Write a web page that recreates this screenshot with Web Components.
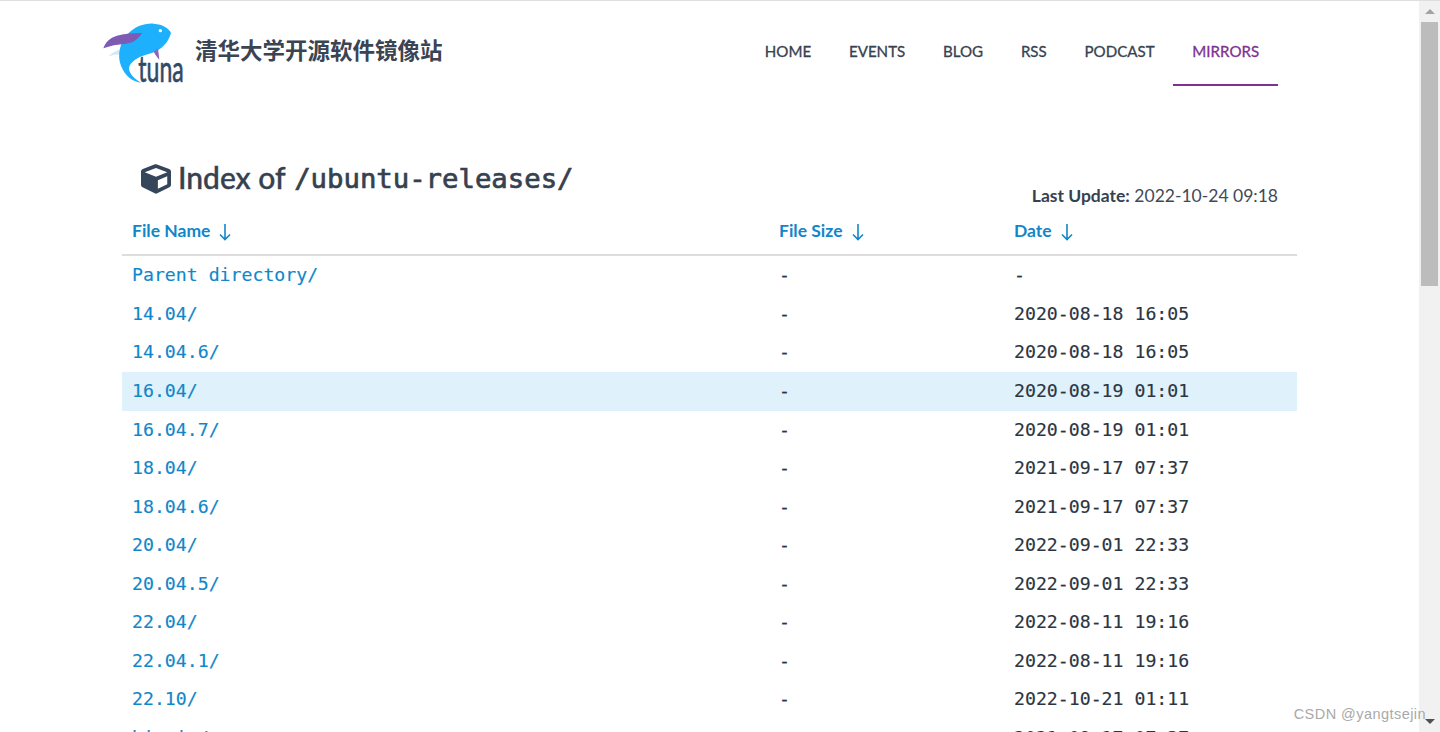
<!DOCTYPE html>
<html lang="zh">
<head>
<meta charset="utf-8">
<title>Index of /ubuntu-releases/</title>
<style>
  html, body { margin: 0; height: 100%; overflow: hidden; background: #fff; }
</style>
</head>
<body>
<mirror-app>
  <mirror-header slot="header">
    <nav-link href="#">HOME</nav-link>
    <nav-link href="#">EVENTS</nav-link>
    <nav-link href="#">BLOG</nav-link>
    <nav-link href="#">RSS</nav-link>
    <nav-link href="#">PODCAST</nav-link>
    <nav-link href="#" active>MIRRORS</nav-link>
  </mirror-header>
  <index-title path="/ubuntu-releases/" updated="2022-10-24 09:18"></index-title>
  <file-table>
    <file-row name="Parent directory/" size="-" date="-"></file-row>
    <file-row short name="14.04/" size="-" date="2020-08-18 16:05"></file-row>
    <file-row name="14.04.6/" size="-" date="2020-08-18 16:05"></file-row>
    <file-row name="16.04/" size="-" date="2020-08-19 01:01" hover></file-row>
    <file-row short name="16.04.7/" size="-" date="2020-08-19 01:01"></file-row>
    <file-row name="18.04/" size="-" date="2021-09-17 07:37"></file-row>
    <file-row short name="18.04.6/" size="-" date="2021-09-17 07:37"></file-row>
    <file-row name="20.04/" size="-" date="2022-09-01 22:33"></file-row>
    <file-row short name="20.04.5/" size="-" date="2022-09-01 22:33"></file-row>
    <file-row name="22.04/" size="-" date="2022-08-11 19:16"></file-row>
    <file-row short name="22.04.1/" size="-" date="2022-08-11 19:16"></file-row>
    <file-row name="22.10/" size="-" date="2022-10-21 01:11"></file-row>
    <file-row name="bionic/" size="-" date="2021-09-17 07:37"></file-row>
  </file-table>
</mirror-app>

<script>
const SANS = `Lato, "Noto Sans CJK SC", sans-serif`;
const MONO = `"DejaVu Sans Mono", monospace`;

class MirrorApp extends HTMLElement {
  connectedCallback() {
    this.attachShadow({ mode: 'open' });
    this.shadowRoot.innerHTML = `
      <style>
        :host { display: flex; height: 100vh; overflow: hidden; position: relative;
                box-sizing: border-box; border-top: 1px solid #dedede; font-family: ${SANS}; color: #35404f; }
        .page { flex: 1; min-width: 0; overflow: hidden; }
        .content { width: 1175px; margin-left: 122px; }
        .watermark { position: absolute; right: 14px; bottom: 10px; color: #a9a9a9;
                     font: 14.5px "Liberation Sans", sans-serif; letter-spacing: .45px; }
      </style>
      <div class="page">
        <slot name="header"></slot>
        <div class="content"><slot></slot></div>
      </div>
      <fake-scrollbar></fake-scrollbar>
      <div class="watermark">CSDN @yangtsejin</div>
    `;
  }
}

class MirrorHeader extends HTMLElement {
  connectedCallback() {
    this.attachShadow({ mode: 'open' });
    this.shadowRoot.innerHTML = `
      <style>
        :host { display: flex; align-items: flex-start; height: 86px; padding: 0 141px 0 95px; }
        .brand { display: flex; align-items: center; gap: 9px; padding-top: 14px; }
        svg { display: block; width: 91px; height: 75px; flex: none; overflow: visible; }
        .title { font: 700 22.5px/1 "Noto Sans CJK SC", sans-serif; color: #3a4452; margin-top: -7px; }
        nav { margin-left: auto; display: flex; }
      </style>
      <div class="brand">
        <svg viewBox="0 0 273 225" aria-hidden="true">
          <path fill="#cfeaf5" d="M40 124C52 112 66 106 80 102L76 118C64 118 52 120 40 124Z"/>
          <path fill="#1db1fd" d="M97 58C120 34 150 24 176 26C204 28 222 40 228 54C220 82 202 100 180 110C164 116 146 120 134 126C116 136 102 148 102 162C104 178 120 192 138 203C112 200 88 180 78 152C66 122 74 84 97 58Z"/>
          <path fill="#7d5bb5" d="M25 100C30 84 44 68 66 62C90 55 118 53 141 54C132 70 116 84 92 86C68 88 44 92 25 100Z"/>
          <path fill="#8a66bd" d="M176 110L189 100C190 110 192 122 193 134C186 126 180 118 176 110Z"/>
          <circle cx="196" cy="47" r="5" fill="#fff"/>
          <text x="130" y="200" font-family="Lato, sans-serif" font-size="110" fill="#2f4a68" stroke="#2f4a68" stroke-width="2"
                textLength="136" lengthAdjust="spacingAndGlyphs">tuna</text>
        </svg>
        <span class="title">清华大学开源软件镜像站</span>
      </div>
      <nav><slot></slot></nav>
    `;
  }
}

class NavLink extends HTMLElement {
  connectedCallback() {
    this.attachShadow({ mode: 'open' });
    this.shadowRoot.innerHTML = `
      <style>
        :host { display: block; }
        a { display: block; box-sizing: border-box; height: 85px; padding: 0 18.9px;
            font: 400 15.1px/101px ${SANS}; -webkit-text-stroke: .3px currentColor; color: #37424f; text-decoration: none; }
        :host([active]) a { color: #7d3292; border-bottom: 2px solid #7d3292; }
      </style>
      <a href="${this.getAttribute('href')}"><slot></slot></a>
    `;
  }
}

class IndexTitle extends HTMLElement {
  connectedCallback() {
    this.attachShadow({ mode: 'open' });
    this.shadowRoot.innerHTML = `
      <style>
        :host { display: flex; justify-content: space-between; align-items: flex-start;
                height: 121px; padding: 0 19px 0 19px; box-sizing: border-box; }
        h1 { margin: 0; padding-top: 70px; display: flex; align-items: center; gap: 7px;
             font: 500 30px/40px ${SANS}; -webkit-text-stroke: .4px currentColor; color: #36414f; white-space: pre; }
        svg { width: 30px; height: 30px; fill: #36465a; flex: none; margin-top: 2px; }
        code { font: 400 27.3px/40px ${MONO}; -webkit-text-stroke: .7px currentColor; margin-left: 1.5px; vertical-align: 1px; }
        .stamp { padding-top: 97px; font-size: 17.5px; line-height: 24px; color: #3f4a58; }
        b { font-weight: 700; color: #36414f; }
      </style>
      <h1><svg viewBox="0 0 512 512" aria-hidden="true"><path d="M239.1 6.3l-208 78c-18.7 7-31.1 25-31.1 45v225.1c0 18.2 10.3 34.8 26.5 42.9l208 104c13.5 6.8 29.4 6.8 42.9 0l208-104c16.3-8.1 26.5-24.8 26.5-42.9V129.3c0-20-12.4-37.9-31.1-44.9l-208-78C262 2.2 250 2.2 239.1 6.3zM256 68.4l192 72v1.1l-192 78-192-78v-1.1l192-72zm32 356V275.5l160-65v133.9l-160 80z"/></svg><span>Index of <code>${this.getAttribute('path')}</code></span></h1>
      <div class="stamp"><b>Last Update:</b> ${this.getAttribute('updated')}</div>
    `;
  }
}

const ARROW = `<svg viewBox="0 0 12 18" aria-hidden="true"><path d="M6 1V16.5M1 11.5L6 16.5L11 11.5" fill="none" stroke="currentColor" stroke-width="1.6"/></svg>`;

class FileTable extends HTMLElement {
  connectedCallback() {
    this.attachShadow({ mode: 'open' });
    const head = ['File Name', 'File Size', 'Date'];
    this.shadowRoot.innerHTML = `
      <style>
        :host { display: block; }
        .head { display: grid; grid-template-columns: 647px 235px 293px; height: 49px; box-sizing: border-box;
                margin-top: -1px; border-bottom: 2px solid #dddddd; }
        .head a { display: flex; align-items: center; gap: 9px; padding: 0 0 0 10px; height: 47px; box-sizing: border-box;
                  font: 700 17.5px ${SANS}; color: #1187c9; text-decoration: none; }
        svg { width: 12px; height: 18px; margin-top: 2px; }
      </style>
      <div class="head">${head.map(h => `<a href="#">${h} ${ARROW}</a>`).join('')}</div>
      <slot></slot>
    `;
  }
}

class FileRow extends HTMLElement {
  connectedCallback() {
    this.attachShadow({ mode: 'open' });
    const a = n => this.getAttribute(n);
    this.shadowRoot.innerHTML = `
      <style>
        /* the original table snaps rows to whole pixels: 39, 38, 39, 39, 38... */
        :host { display: grid; grid-template-columns: 647px 235px 293px; height: 39px;
                font: 18.2px/38px ${MONO}; -webkit-text-stroke: .15px currentColor; color: #2b3542; }
        :host([short]) { height: 38px; }
        :host([hover]) { background: #dff1fa; }
        div { padding-left: 10px; white-space: pre; }
        a { color: #1187c9; text-decoration: none; }
      </style>
      <div><a href="#">${a('name')}</a></div>
      <div>${a('size')}</div>
      <div>${a('date')}</div>
    `;
  }
}

class FakeScrollbar extends HTMLElement {
  connectedCallback() {
    this.attachShadow({ mode: 'open' });
    this.shadowRoot.innerHTML = `
      <style>
        :host { display: flex; flex-direction: column; align-items: center; flex: none; width: 21px; background: #f1f1f1; }
        .btn { flex: none; height: 21px; width: 100%; display: flex; align-items: center; justify-content: center; }
        .up { border: solid transparent; border-width: 0 5px 5px; border-bottom-color: #a3a3a3; }
        .down { border: solid transparent; border-width: 5px 5px 0; border-top-color: #505050; }
        .thumb { flex: none; width: 17px; height: 264px; background: #bcbcbc; }
        .rest { flex: 1; }
      </style>
      <div class="btn"><div class="up"></div></div>
      <div class="thumb"></div>
      <div class="rest"></div>
      <div class="btn"><div class="down"></div></div>
    `;
  }
}

customElements.define('mirror-app', MirrorApp);
customElements.define('mirror-header', MirrorHeader);
customElements.define('nav-link', NavLink);
customElements.define('index-title', IndexTitle);
customElements.define('file-table', FileTable);
customElements.define('file-row', FileRow);
customElements.define('fake-scrollbar', FakeScrollbar);
</script>
</body>
</html>
